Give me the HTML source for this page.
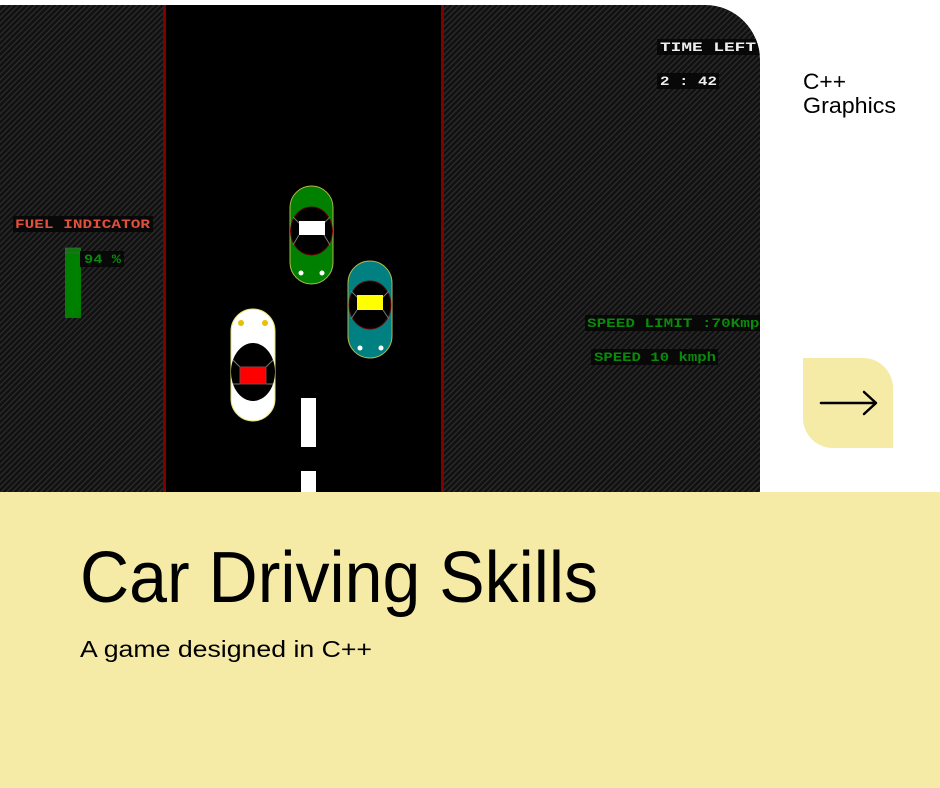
<!DOCTYPE html>
<html><head><meta charset="utf-8"><style>
html,body{margin:0;padding:0;width:940px;height:788px;overflow:hidden;background:#fff}
svg{display:block}
</style></head><body>
<svg width="940" height="788" viewBox="0 0 940 788" xmlns="http://www.w3.org/2000/svg">
<defs>
<pattern id="hatch" width="4" height="4" patternUnits="userSpaceOnUse" patternTransform="rotate(45)">
<rect width="4" height="4" fill="#111"/>
<rect width="1.2" height="4" fill="#2e2e2e"/>
</pattern>
<clipPath id="gc"><path d="M0 5 H705 A55 55 0 0 1 760 60 V492 H0 Z"/></clipPath>
</defs>
<rect width="940" height="788" fill="#fff"/>
<g clip-path="url(#gc)">
<rect x="0" y="5" width="760" height="487" fill="url(#hatch)"/>
<rect x="163" y="5" width="281" height="487" fill="#000"/>
<rect x="163" y="5" width="3" height="487" fill="#800000"/>
<rect x="441" y="5" width="3" height="487" fill="#800000"/>
<rect x="301" y="398" width="15" height="49" fill="#fff"/>
<rect x="301" y="471" width="15" height="21" fill="#fff"/>
<g font-family="Liberation Mono,'Courier New',monospace" font-weight="bold" font-size="13">
<rect x="13" y="216" width="140" height="16" fill="#080808"/>
<text x="15" y="228" fill="#e0503a" textLength="135" lengthAdjust="spacingAndGlyphs">FUEL INDICATOR</text>
<rect x="65" y="248" width="16" height="70" fill="#008000"/>
<rect x="66" y="248" width="14" height="5" fill="none" stroke="#555" stroke-width="0.8"/>
<rect x="80" y="251" width="44" height="16" fill="#080808"/>
<text x="84" y="263" fill="#0a8a0a" textLength="37" lengthAdjust="spacingAndGlyphs">94 %</text>
<rect x="657" y="39" width="110" height="16" fill="#080808"/>
<text x="660" y="51" fill="#eee" textLength="96" lengthAdjust="spacingAndGlyphs">TIME LEFT</text>
<rect x="657" y="73" width="62" height="16" fill="#080808"/>
<text x="660" y="85" fill="#eee" textLength="57" lengthAdjust="spacingAndGlyphs">2 : 42</text>
<rect x="585" y="315" width="180" height="16" fill="#080808"/>
<text x="587" y="327" fill="#0a8a0a" textLength="182" lengthAdjust="spacingAndGlyphs">SPEED LIMIT :70Kmph</text>
<rect x="591" y="349" width="127" height="16" fill="#080808"/>
<text x="594" y="361" fill="#0a8a0a" textLength="122" lengthAdjust="spacingAndGlyphs">SPEED 10 kmph</text>
</g>
<!-- green car -->
<rect x="290" y="186" width="43" height="98" rx="21.5" fill="#008000" stroke="#b5b54a" stroke-width="1"/>
<ellipse cx="311.5" cy="231" rx="21" ry="24" fill="#000" stroke="#600" />
<path d="M293 217 L299 223 M330 217 L324 223 M293 245 L299 235 M330 245 L324 235" stroke="#777" stroke-width="1"/>
<rect x="299" y="221" width="26" height="14" fill="#fff"/>
<circle cx="301" cy="273" r="2.5" fill="#fff"/><circle cx="322" cy="273" r="2.5" fill="#fff"/>
<!-- teal car -->
<rect x="348" y="261" width="44" height="97" rx="22" fill="#008080" stroke="#b5b54a"/>
<ellipse cx="370" cy="305" rx="21" ry="24" fill="#000" stroke="#600"/>
<path d="M351 291 L357 297 M389 291 L383 297 M351 319 L357 310 M389 319 L383 310" stroke="#777" stroke-width="1"/>
<rect x="357" y="295" width="26" height="15" fill="#ff0"/>
<circle cx="360" cy="348" r="2.5" fill="#fff"/><circle cx="381" cy="348" r="2.5" fill="#fff"/>
<!-- white car -->
<rect x="231" y="309" width="44" height="112" rx="22" fill="#fff" stroke="#e6e070"/>
<ellipse cx="253" cy="372" rx="22" ry="29" fill="#000"/>
<path d="M233 360 L240 367 M273 360 L266 367 M233 384 L240 384 M273 384 L266 384" stroke="#777" stroke-width="1"/>
<rect x="240" y="367" width="26" height="17" fill="#f00" stroke="#844"/>
<circle cx="241" cy="323" r="3" fill="#e8c000"/><circle cx="265" cy="323" r="3" fill="#e8c000"/>
</g>
<text x="803" y="89" font-family="Liberation Sans,sans-serif" font-size="22" fill="#000" textLength="43" lengthAdjust="spacingAndGlyphs">C++</text>
<text x="803" y="113" font-family="Liberation Sans,sans-serif" font-size="22" fill="#000" textLength="93" lengthAdjust="spacingAndGlyphs">Graphics</text>
<path d="M803 358 H863 A30 30 0 0 1 893 388 V448 H833 A30 30 0 0 1 803 418 Z" fill="#f5eba7"/>
<path d="M821 403 H875 M864 392 L876 403 L864 414" fill="none" stroke="#000" stroke-width="2.5" stroke-linecap="round" stroke-linejoin="round"/>
<rect x="0" y="492" width="940" height="296" fill="#f5eba7"/>
<text x="80" y="602" font-family="Liberation Sans,sans-serif" font-size="72" fill="#000" textLength="518" lengthAdjust="spacingAndGlyphs">Car Driving Skills</text>
<text x="80" y="657" font-family="Liberation Sans,sans-serif" font-size="23" fill="#000" textLength="292" lengthAdjust="spacingAndGlyphs">A game designed in C++</text>
</svg>
</body></html>
